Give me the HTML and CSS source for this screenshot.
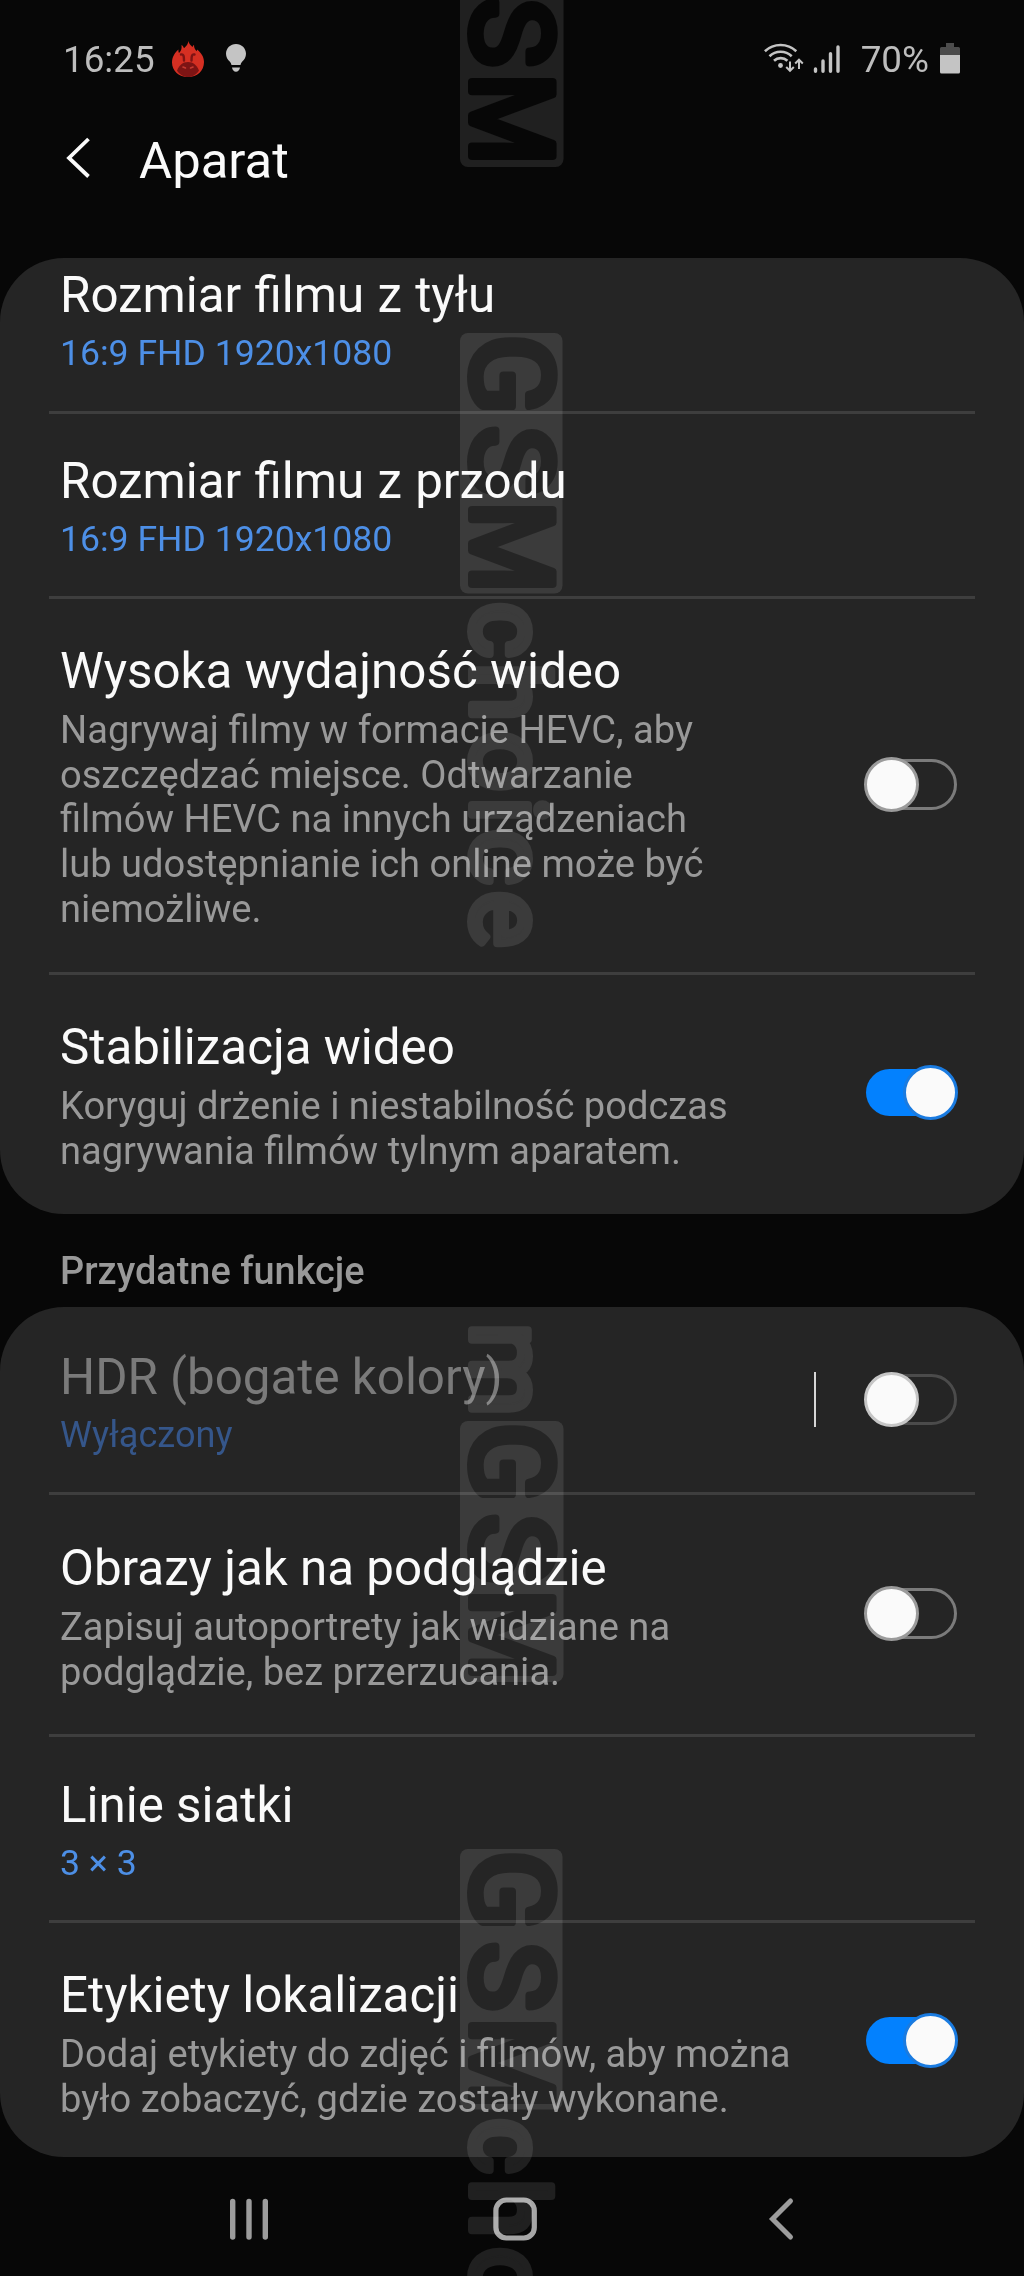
FILE: index.html
```html
<!DOCTYPE html>
<html lang="pl">
<head>
<meta charset="utf-8">
<title>Aparat</title>
<link rel="stylesheet" href="styles.css">
</head>
<body>
<div class="screen">
  <header class="status">
    <span class="status-text">16:25</span>
    <svg class="ic-flame" width="32" height="36" viewBox="0 0 32 36">
      <path fill="#d52f22" d="M16.500 0c.3 2.500 1.800 4 4 6 .4-1 .8-1.700 1.500-2.300 0 3.300 1 4.800 2.800 6.500L25 8.500C29.500 12 32 16 32 21c0 9-7 15-16 15S0 30 0 21.500c0-5 2.500-9.500 6.500-13-.2 1.500 0 2.500.5 3.500C9 10 10 8 9.500 4c1.200.7 2 1.800 2.500 3.200C14.500 5 16 3 16.500 0z"/>
      <path fill="#7d1414" d="M16 21c5.500 0 8.500 3 11 8.500C24.500 33.500 20.500 36 16 36S7.500 33.500 5 29.500C7.500 24 10.500 21 16 21z"/>
      <path fill="none" stroke="#7d1414" stroke-width="2.400" stroke-linecap="round" d="M9 13.500c2.500-.5 3 1 3 6M22.500 13.500c-2.500-.5-3 1-3 6"/>
      <path fill="none" stroke="#c63a30" stroke-width="1.600" stroke-linecap="round" d="M11 26l2.500 1M21 26l-2.500 1"/>
    </svg>
    <svg class="ic-bulb" width="22" height="30" viewBox="0 0 22 30">
      <path fill="#c4c4c4" d="M11 1c5.700 0 10 4.300 10 9.700 0 3.400-1.600 5.700-3.700 7.800-1.200 1.300-1.500 2.500-1.800 3.500h-9C6.200 21 5.900 19.800 4.700 18.500 2.600 16.400 1 14.100 1 10.700 1 5.300 5.300 1 11 1zM7 24.500h8c-.3 2.500-2 4.300-4 4.300s-3.700-1.800-4-4.300z"/>
    </svg>
    <span class="spacer"></span>
    <svg class="ic-wifi" width="40" height="32" viewBox="0 0 40 32">
      <g fill="none" stroke="#c4c4c4" stroke-width="2.600">
        <path d="M.9 9.200a23 23 0 0 1 31.400 0M5.500 14.200a16 16 0 0 1 22.200 0M10 18.800a9.600 9.600 0 0 1 13.400 0"/>
        <path stroke-width="2" d="M26 19.500v9M22.200 25l3.800 3.800 3.800-3.800M35 27v-9M31.200 21.500l3.800-3.800 3.800 3.800"/>
      </g>
      <circle cx="16.500" cy="23.500" r="2.400" fill="#c4c4c4"/>
    </svg>
    <svg class="ic-signal" width="28" height="30" viewBox="0 0 28 30">
      <path stroke="#c4c4c4" stroke-width="3.400" stroke-linecap="round" d="M2.500 25v2.300M10 17v10.300M17.500 9.800v17.500M25 3v24.300"/>
    </svg>
    <span class="status-text">70%</span>
    <svg class="ic-battery" width="22" height="32" viewBox="0 0 22 32">
      <path fill="#4c4c4c" d="M7 1h8v4h4.500a1.500 1.500 0 0 1 1.500 1.500V13H1V6.500A1.500 1.500 0 0 1 2.500 5H7z"/>
      <path fill="#c4c4c4" d="M1 13h20v17a1.500 1.500 0 0 1-1.500 1.500h-17A1.500 1.500 0 0 1 1 30z"/>
    </svg>
  </header>

  <div class="appbar">
    <svg class="ic-back" width="26" height="42" viewBox="0 0 26 42">
      <path fill="none" stroke="#fafafa" stroke-width="3.800" d="M23.500 2L4 21l19.500 18.500"/>
    </svg>
    <h1 class="appbar-title">Aparat</h1>
  </div>

  <section class="card">
    <div class="row row-first">
      <div class="label"><div class="title">Rozmiar filmu z tyłu</div><div class="value">16:9 FHD 1920x1080</div></div>
    </div>
    <div class="row row-front">
      <div class="label"><div class="title">Rozmiar filmu z przodu</div><div class="value">16:9 FHD 1920x1080</div></div>
    </div>
    <div class="row row-hevc">
      <div class="label"><div class="title">Wysoka wydajność wideo</div>
        <div class="desc">Nagrywaj filmy w formacie HEVC, aby<br>oszczędzać miejsce. Odtwarzanie<br>filmów HEVC na innych urządzeniach<br>lub udostępnianie ich online może być<br>niemożliwe.</div></div>
      <div class="toggle"><span class="thumb"></span></div>
    </div>
    <div class="row row-stab">
      <div class="label"><div class="title">Stabilizacja wideo</div>
        <div class="desc">Koryguj drżenie i niestabilność podczas<br>nagrywania filmów tylnym aparatem.</div></div>
      <div class="toggle on"><span class="thumb"></span></div>
    </div>
  </section>

  <h2 class="section">Przydatne funkcje</h2>

  <section class="card">
    <div class="row row-hdr disabled">
      <div class="label"><div class="title">HDR (bogate kolory)</div><div class="value">Wyłączony</div></div>
      <span class="split"></span>
      <div class="toggle"><span class="thumb"></span></div>
    </div>
    <div class="row row-preview">
      <div class="label"><div class="title">Obrazy jak na podglądzie</div>
        <div class="desc">Zapisuj autoportrety jak widziane na<br>podglądzie, bez przerzucania.</div></div>
      <div class="toggle"><span class="thumb"></span></div>
    </div>
    <div class="row row-grid">
      <div class="label"><div class="title">Linie siatki</div><div class="value">3 × 3</div></div>
    </div>
    <div class="row row-geo">
      <div class="label"><div class="title">Etykiety lokalizacji</div>
        <div class="desc">Dodaj etykiety do zdjęć i filmów, aby można<br>było zobaczyć, gdzie zostały wykonane.</div></div>
      <div class="toggle on"><span class="thumb"></span></div>
    </div>
  </section>

  <nav class="navbar">
    <svg width="44" height="48" viewBox="0 0 44 48"><path stroke="#9c9c9c" stroke-width="5.400" stroke-linecap="round" d="M5.700 6.500v35.500M22 6.500v35.500M38.300 6.500v35.500"/></svg>
    <svg class="ic-home" width="48" height="48" viewBox="0 0 48 48"><rect x="4.900" y="5" width="38.400" height="38" rx="10.500" fill="none" stroke="#a6a6a6" stroke-width="5.200"/></svg>
    <svg width="30" height="48" viewBox="0 0 30 48"><path fill="none" stroke="#9c9c9c" stroke-width="5" stroke-linecap="round" d="M24.500 6L6.500 24l18 18"/></svg>
  </nav>

  <!-- Watermark, running top to bottom down the middle; blended so its black parts vanish -->
  <svg class="watermark" width="110" height="2276" viewBox="457 0 110 2276">
    <g transform="translate(473 0) rotate(90)">
      <g class="tile">
        <rect x="-94" y="-90.500" width="261" height="103.500" rx="8"/>
        <rect x="333" y="-89.500" width="260.500" height="102.500" rx="8"/>
        <rect x="1421" y="-90.500" width="261" height="103.500" rx="8"/>
        <rect x="1849" y="-89.500" width="260.500" height="102.500" rx="8"/>
      </g>
      <g class="brand">
        <text x="-2" y="1" textLength="69" lengthAdjust="spacingAndGlyphs">S</text>
        <text x="73" y="1" textLength="92" lengthAdjust="spacingAndGlyphs">M</text>
        <text x="334.500" y="1" textLength="80" lengthAdjust="spacingAndGlyphs">G</text>
        <text x="426" y="1" textLength="69" lengthAdjust="spacingAndGlyphs">S</text>
        <text x="501" y="1" textLength="92" lengthAdjust="spacingAndGlyphs">M</text>
        <text x="1422.500" y="1" textLength="80" lengthAdjust="spacingAndGlyphs">G</text>
        <text x="1514" y="1" textLength="69" lengthAdjust="spacingAndGlyphs">S</text>
        <text x="1589" y="1" textLength="92" lengthAdjust="spacingAndGlyphs">M</text>
        <text x="1850.500" y="1" textLength="80" lengthAdjust="spacingAndGlyphs">G</text>
        <text x="1942" y="1" textLength="69" lengthAdjust="spacingAndGlyphs">S</text>
        <text x="2017" y="1" textLength="92" lengthAdjust="spacingAndGlyphs">M</text>
      </g>
      <g class="choice">
        <text x="602 663 731 797 829 891" y="1">choice</text>
        <text x="1323" y="1">m</text>
        <text x="2118 2179 2247" y="1">cho</text>
      </g>
    </g>
  </svg>
</div>
</body>
</html>
```
FILE: styles.css
```css
* { box-sizing: border-box; }

body {
  margin: 0;
  background: #070707;
  font-family: Roboto, "Liberation Sans", sans-serif;
}

.screen {
  position: relative;
  width: 1024px;
  height: 2276px;
  overflow: hidden;
  background: #070707;
  display: flex;
  flex-direction: column;
}

.status {
  height: 120px;
  padding: 0 63px 0 63px;
  display: flex;
  align-items: center;
}
.status-text { font-size: 36.8px; line-height: 44px; color: #bdbdbd; }
.ic-flame { margin: -3px 0 0 17px; }
.ic-bulb { margin: -4px 0 0 21px; }
.spacer { flex: 1; }
.ic-wifi { margin: -5px 9px 0 0; }
.ic-signal { margin: -2px 20px 0 0; }
.ic-battery { margin: -4px 0 0 10px; }

.appbar {
  height: 138px;
  padding: 10px 0 0 65px;
  display: flex;
  align-items: flex-start;
}
.ic-back { margin-top: 7px; }
.appbar-title {
  margin: 0 0 0 48px;
  font-size: 50.8px;
  font-weight: 400;
  line-height: 62px;
  color: #fafafa;
}

.card {
  background: #252525;
  border-radius: 64px;
  overflow: hidden;
}
.row {
  position: relative;
  display: flex;
  align-items: center;
  padding: 0 66px 0 60px;
}
.row + .row::before {
  content: "";
  position: absolute;
  left: 49px;
  right: 49px;
  top: -3px;
  height: 3px;
  background: #3e3e3e;
}
.label { flex: 1; align-self: flex-start; }
.title { font-size: 49.3px; line-height: 62px; color: #fafafa; white-space: nowrap; }
.value { margin-top: 5px; font-size: 35.6px; line-height: 44.6px; color: #4d8fe6; }
.desc { margin-top: 6px; font-size: 38.1px; line-height: 44.7px; color: #999; white-space: nowrap; }

.row-first { height: 156px; padding-top: 6px; }
.row-front { height: 185px; }
.row-front .label { padding-top: 36px; }
.row-first .title, .row-front .title { word-spacing: 1px; }
.row-hevc { height: 376px; padding-bottom: 5px; }
.row-hevc .label { padding-top: 41px; }
.row-stab { height: 239px; padding-bottom: 4px; }
.row-stab .label { padding-top: 41px; }
.row-hdr { height: 188px; padding-bottom: 3px; }
.row-hdr .label { padding-top: 39px; }
.row-preview { height: 242px; padding-bottom: 5px; }
.row-preview .label { padding-top: 42px; }
.row-grid { height: 186px; }
.row-grid .label { padding-top: 37px; }
.row-geo { height: 234px; }
.row-geo .label { padding-top: 41px; }

.toggle {
  width: 91px;
  height: 51px;
  margin-right: 1px;
  border: 3px solid #7b7b7b;
  border-radius: 26px;
  display: flex;
  align-items: center;
  flex: none;
}
.thumb {
  flex: none;
  width: 55px;
  height: 55px;
  margin-left: -5px;
  border: 3px solid #9b9b9b;
  border-radius: 50%;
  background: #fafafa;
}
.toggle.on {
  height: 47px;
  border: 0;
  background: #0381fe;
  justify-content: flex-end;
}
.toggle.on .thumb { margin-right: -1px; border-color: #1a7be0; }

.disabled .title { color: #7a7a7a; }
.disabled .value { font-size: 36.1px; color: #35568a; }
.disabled .toggle { border-color: #4b4b4b; }
.disabled .thumb { border-color: #c6c6c6; }
.split { width: 2px; height: 55px; margin-right: 50px; background: #d6d6d6; }

.section {
  margin: 0;
  height: 93px;
  padding: 35px 0 0 60px;
  font-size: 37.9px;
  font-weight: 500;
  line-height: 45px;
  color: #999;
}

.navbar {
  height: 119px;
  padding: 4px 228px 0 227px;
  display: flex;
  align-items: center;
  justify-content: space-between;
}
.ic-home { margin: 0 4px 0 -4px; }

.watermark {
  position: absolute;
  left: 457px;
  top: 0;
  mix-blend-mode: screen;
}
.watermark text {
  font-family: Roboto, sans-serif;
  font-weight: 400;
  stroke-width: 8px;
  stroke-linejoin: round;
}
.tile { fill: #1a1a1a; }
.brand { font-size: 112.5px; fill: #000; stroke: #000; }
.choice { font-size: 106px; fill: #1a1a1a; stroke: #1a1a1a; }
```
